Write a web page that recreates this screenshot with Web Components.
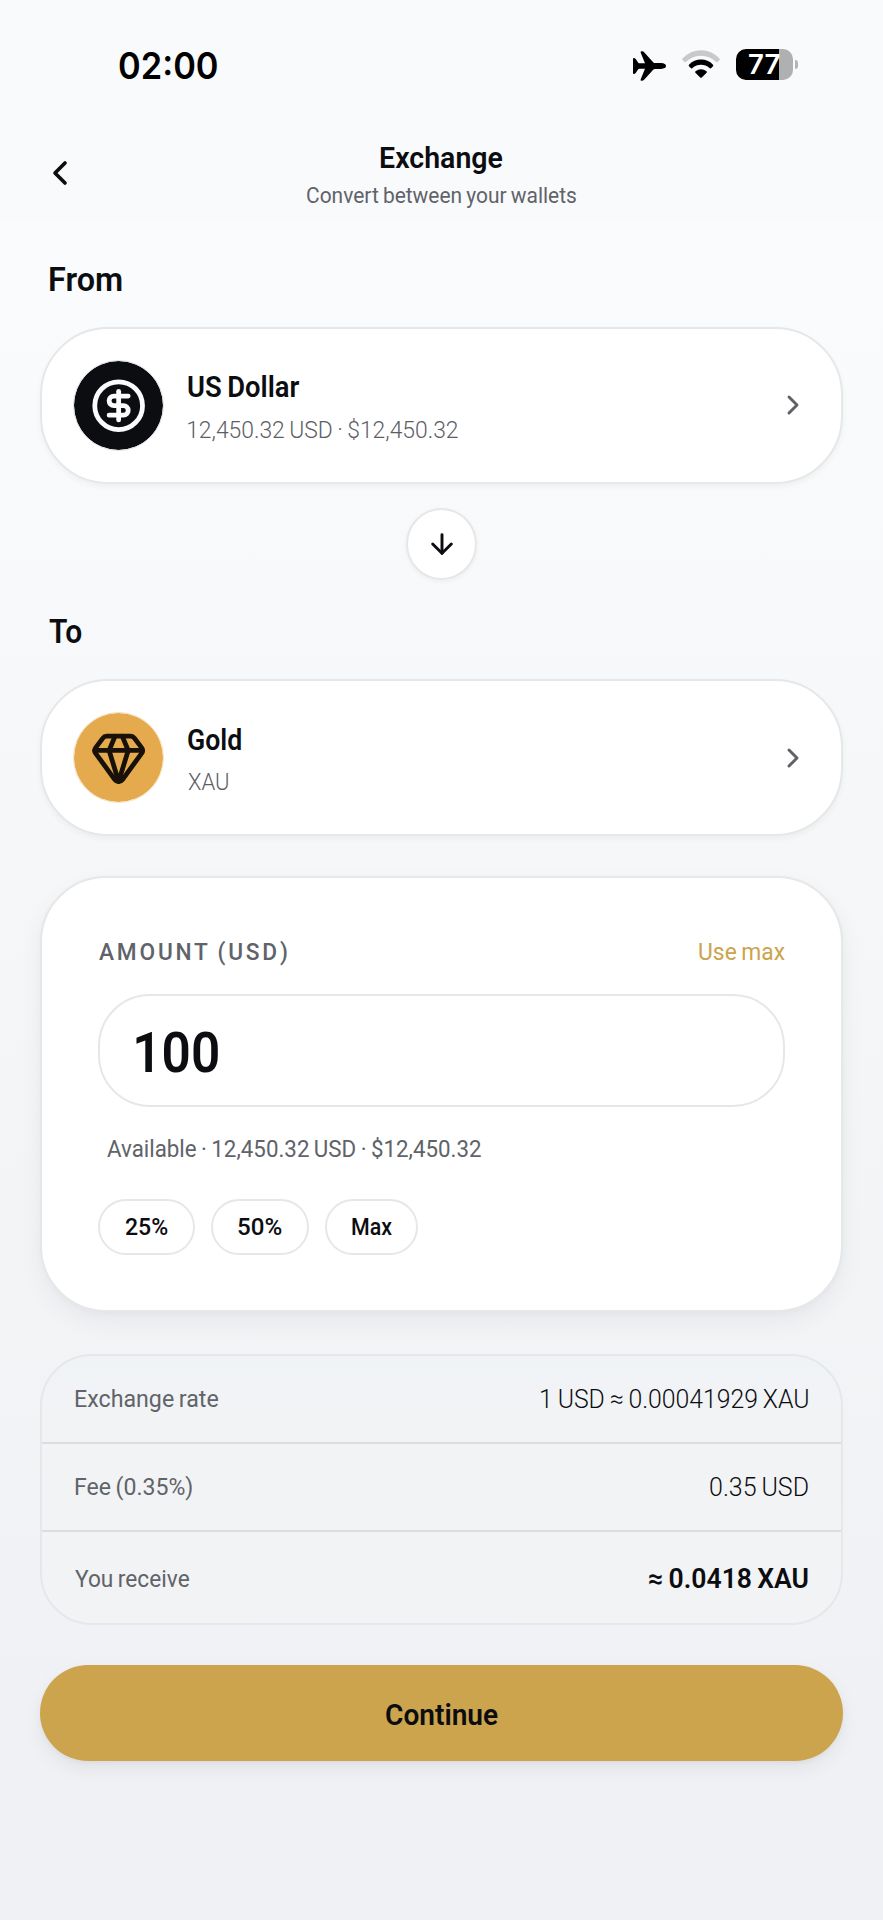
<!DOCTYPE html>
<html lang="en">
<head>
<meta charset="utf-8">
<title>Exchange</title>
<style>
html,body{margin:0;padding:0}
body{width:883px;height:1920px;overflow:hidden;font-family:Roboto,"Open Sans",sans-serif;color:#0c0d11}
</style>
</head>
<body>
<exchange-screen></exchange-screen>
<script>
const ctx = document.createElement('canvas').getContext('2d');
const define = (name, html, ready) => customElements.define(name, class extends HTMLElement {
  connectedCallback() {
    if (this.shadowRoot) return;
    const t = document.createElement('template');
    t.innerHTML = html;
    this.attachShadow({mode: 'open'}).appendChild(t.content.cloneNode(true));
    if (ready) ready(this, this.shadowRoot);
  }
});

/* One line of text whose ink fills the given width. */
define('fit-text', `<style>
:host{display:block;flex:none;white-space:nowrap}
span{display:inline-block;transform-origin:0 50%;white-space:pre}
</style><span><slot></slot></span>`, (el, root) => {
  const a = n => el.getAttribute(n);
  const size = +a('size'), w = +a('w'), ls = +(a('spacing') || 0), weight = a('weight') || 400;
  const family = a('family') || 'Roboto';
  const ws = -size * 0.05;
  const span = root.querySelector('span');
  el.style.width = w + 'px';
  el.style.height = el.style.lineHeight = size * 1.2 + 'px';
  span.style.font = `${weight} ${size}px/${size * 1.2}px ${family}, sans-serif`;
  span.style.letterSpacing = ls + 'px';
  span.style.wordSpacing = ws + 'px';
  ctx.font = `${weight} ${size}px ${family}, sans-serif`;
  ctx.letterSpacing = ls + 'px';
  ctx.wordSpacing = ws + 'px';
  const m = ctx.measureText(el.textContent);
  const k = w / (m.actualBoundingBoxRight + m.actualBoundingBoxLeft);
  span.style.transform = `translateX(${m.actualBoundingBoxLeft * k}px) scaleX(${k})`;
});

const icons = {
  back: '<path d="m15 18-6-6 6-6"/>',
  next: '<path d="m9 18 6-6-6-6"/>',
  down: '<path d="M12 5v14"/><path d="m19 12-7 7-7-7"/>',
  dollar: '<circle cx="12" cy="12" r="10"/><path d="M16 8h-6a2 2 0 1 0 0 4h4a2 2 0 1 1 0 4H8"/><path d="M12 18V6"/>',
  gem: '<path d="M10.5 3 8 9l4 13 4-13-2.5-6"/><path d="M17 3a2 2 0 0 1 1.6.8l3 4a2 2 0 0 1 .013 2.382l-7.99 10.986a2 2 0 0 1-3.247 0l-7.99-10.986A2 2 0 0 1 2.4 7.8l2.998-3.997A2 2 0 0 1 7 3z"/><path d="M2 9h20"/>'
};
define('line-icon', `<style>:host{display:block;flex:none}svg{display:block;fill:none;stroke:currentColor;stroke-linecap:round;stroke-linejoin:round}</style><svg viewBox="0 0 24 24"></svg>`, (el, root) => {
  const s = root.querySelector('svg');
  s.setAttribute('width', el.getAttribute('size'));
  s.setAttribute('height', el.getAttribute('size'));
  s.setAttribute('stroke-width', el.getAttribute('stroke') || 2);
  s.innerHTML = icons[el.getAttribute('name')];
});

define('battery-level', `<style>
:host{display:flex;align-items:center;gap:2px;height:31px}
.body{width:57px;height:31px;box-sizing:border-box;border-radius:10px;background:linear-gradient(90deg,#000 43.5px,#afb0b2 43.5px);padding:0 0 0 12.500px;color:#fff}
.nub{width:3px;height:9px;border-radius:0 4px 4px 0;background:#b3b4b6}
</style><div class="body"><fit-text size="26.500" weight="600" family="Inter" w="31">77</fit-text></div><div class="nub"></div>`);

define('status-bar', `<style>
:host{display:flex;height:131px;box-sizing:border-box;padding:44.500px 85px 0 119px;justify-content:space-between;align-items:flex-start;color:#000}
.icons{display:flex;padding-top:4.500px}
svg{display:block}
.plane{margin:1px 16.500px 0 0}.wifi{margin:1px 16px 0 0}
</style>
<fit-text size="36.5" weight="600" family="Inter" w="98.500">02:00</fit-text>
<div class="icons">
<svg class="plane" width="33" height="32" viewBox="0 0 33 32"><path d="M0 8.8Q0 8 .9 8Q1.8 8 2.7 9L5.200 12.700Q5.600 13.300 6.400 13.300H12L7.700 2.800Q7.200 1.300 8.500 1.300H9.200Q10.600 1.300 11.600 2.700L20.400 12.400Q21 13.100 22 13.100H28Q33 13.400 33 16Q33 18.600 28 18.900H22Q21 18.900 20.400 19.600L11.600 29.300Q10.600 30.700 9.200 30.700H8.500Q7.200 30.700 7.700 29.200L12 18.700H6.400Q5.600 18.700 5.200 19.300L2.700 23Q1.800 24 .9 24Q0 24 0 23.200Z"/></svg>
<svg class="wifi" width="38" height="29" viewBox="0 0 38 29"><path fill="#c8c9cb" d="M.5 8.4Q8.5.2 19 .2T37.500 8.400Q38.200 9.200 37.500 10L35.500 12Q34.800 12.500 34 11.800Q27.500 5.800 19 5.800T4 11.800Q3.200 12.500 2.500 12L.5 10Q-.2 9.200.5 8.400Z"/><path d="M7 14.700Q12 9.600 19 9.600T31 14.700Q31.700 15.500 31 16.200L29 18.200Q28.300 18.800 27.500 18.100Q23.800 14.800 19 14.800T10.500 18.100Q9.700 18.800 9 18.200L7 16.200Q6.300 15.500 7 14.700Z"/><path d="M13.500 21.200Q16 19.200 19 19.200T24.500 21.200Q25.300 22 24.600 22.700L19.800 27.400Q19 28.200 18.200 27.400L13.400 22.700Q12.700 22 13.500 21.200Z"/></svg>
<battery-level></battery-level>
</div>`);

define('page-header', `<style>
:host{display:grid;grid-template-columns:1fr auto 1fr;height:90px;box-sizing:border-box;padding:10px 40px 0}
.back{padding:12px 0 0 0}
.mid{display:flex;flex-direction:column;align-items:center;gap:6.200px}
.sub{color:#606369}
</style>
<line-icon class="back" name="back" size="40" stroke="2.200"></line-icon>
<div class="mid"><fit-text size="29.500" weight="600" w="122">Exchange</fit-text><fit-text class="sub" size="22" w="269.500">Convert between your wallets</fit-text></div><span></span>`);

define('wallet-card', `<style>
:host{display:flex;align-items:center;box-sizing:border-box;height:157px;padding:0 31px 0 31px;border:2px solid #e6e7e9;border-radius:68px;background:#fff;box-shadow:0 3px 6px rgba(15,20,30,.045)}
.coin{width:91px;height:91px;box-sizing:border-box;border-radius:50%;border:1.500px solid;background-clip:padding-box!important;display:flex;align-items:center;justify-content:center;flex:none}
:host([coin=dollar]) .coin{background:#0c0d11;color:#fafbfd;border-color:#e0e1e4}
:host([coin=gem]) .coin{background:#e6aa4e;color:#171109;border-color:#f5dfba}
.names{display:flex;flex-direction:column;gap:9.200px;margin-left:24px;padding-top:2.500px;flex:1}
::slotted([slot=sub]){color:#5b5e64}
.next{color:#5f6167;margin-right:1.500px}
</style>
<div class="coin"><line-icon size="57.300"></line-icon></div>
<div class="names"><slot name="name"></slot><slot name="sub"></slot></div>
<line-icon class="next" name="next" size="32" stroke="2.200"></line-icon>`, (el, root) => {
  const old = root.querySelector('.coin line-icon');
  const icon = document.createElement('line-icon');
  icon.setAttribute('name', el.getAttribute('coin'));
  icon.setAttribute('size', '57.3');
  old.replaceWith(icon);
});

define('swap-button', `<style>
:host{display:flex;align-items:center;justify-content:center;box-sizing:border-box;width:71px;height:72px;border-radius:50%;border:2px solid #e6e7e9;background:#fff;box-shadow:0 2px 5px rgba(15,20,30,.045)}
</style><line-icon name="down" size="32" stroke="2.200"></line-icon>`);

define('quick-chip', `<style>
:host{display:flex;align-items:center;justify-content:center;box-sizing:border-box;height:56px;border:2px solid #e6e7e9;border-radius:28px}
</style><slot></slot>`);

define('amount-card', `<style>
:host{display:block;box-sizing:border-box;height:436px;padding:59px 56px 0;border:2px solid #e6e7e9;border-radius:66px;background:#fff;box-shadow:0 10px 24px rgba(15,20,30,.05),0 2px 6px rgba(15,20,30,.025)}
.head{display:flex;justify-content:space-between;color:#606369}
.head :first-child{margin-left:.500px}
.max{color:#cba44d}
.input{margin:27.800px 0 0;box-sizing:border-box;height:113px;border:2px solid #e6e7e9;border-radius:52px;padding:24px 0 0 36px}
.avail{margin:26.600px 0 0 8.500px;color:#606369}
.chips{display:flex;gap:16px;margin-top:36px}
</style>
<div class="head"><fit-text size="24.300" weight="500" spacing="3" w="188">AMOUNT (USD)</fit-text><fit-text class="max" size="24.300" w="86">Use max</fit-text></div>
<div class="input"><fit-text size="55" weight="600" w="82">100</fit-text></div>
<fit-text class="avail" size="24.300" w="374">Available · 12,450.32 USD · $12,450.32</fit-text>
<div class="chips">
<quick-chip style="width:97px"><fit-text size="24" weight="500" w="42.500">25%</fit-text></quick-chip>
<quick-chip style="width:98px"><fit-text size="24" weight="500" w="43.500">50%</fit-text></quick-chip>
<quick-chip style="width:93px"><fit-text size="24" weight="500" w="40">Max</fit-text></quick-chip>
</div>`);

define('summary-row', `<style>
:host{display:flex;align-items:center;justify-content:space-between;box-sizing:border-box;height:88px;padding:.500px 33px 0 33px;border-bottom:2px solid #dcdde0}
:host(:last-child){border-bottom:0;height:91px;padding-top:2px}
::slotted([slot=label]){color:#606369}
</style><slot name="label"></slot><slot name="value"></slot>`);

define('summary-list', `<style>
:host{display:block;box-sizing:border-box;height:271px;border:2px solid #e6e7e9;border-radius:52px;background:linear-gradient(#f0f3f6,#f2f3f5 30%,#f2f3f5)}
</style><slot></slot>`);

define('primary-button', `<style>
:host{display:flex;align-items:center;justify-content:center;box-sizing:border-box;height:96px;padding-top:4px;border-radius:48px;background:#cba44d;box-shadow:0 8px 20px rgba(15,20,30,.06),0 2px 5px rgba(15,20,30,.04)}
</style><slot></slot>`);

define('exchange-screen', `<style>
:host{display:block;width:883px;height:1920px;background:linear-gradient(#fbfcfe 0,#fafbfd 300px,#f4f5f7 1100px,#eff1f4 1750px,#eff1f4)}
.top{background:#f9fafc;height:221px}
main{display:flex;flex-direction:column;padding:0 40px}
.h{margin:39px 0 27.400px 10px}
.h.to{margin:31.800px 0 28.100px 9px}
swap-button{margin:24px auto 0 366px}
amount-card{margin-top:40px}
summary-list{margin-top:42px}
primary-button{margin-top:40px}
</style>
<div class="top"><status-bar></status-bar><page-header></page-header></div>
<main>
<fit-text class="h" size="33" weight="600" w="71.500">From</fit-text>
<wallet-card coin="dollar"><fit-text slot="name" size="30" weight="600" w="111.500">US Dollar</fit-text><fit-text slot="sub" size="24.500" weight="350" w="270">12,450.32 USD · $12,450.32</fit-text></wallet-card>
<swap-button></swap-button>
<fit-text class="h to" size="33" weight="600" w="32.500">To</fit-text>
<wallet-card coin="gem"><fit-text slot="name" size="30" weight="600" w="53.500">Gold</fit-text><fit-text slot="sub" size="24.500" weight="350" w="40.500">XAU</fit-text></wallet-card>
<amount-card></amount-card>
<summary-list>
<summary-row><fit-text slot="label" size="24" w="143">Exchange rate</fit-text><fit-text slot="value" size="26" weight="350" w="267.500">1 USD ≈ 0.00041929 XAU</fit-text></summary-row>
<summary-row><fit-text slot="label" size="24" w="117">Fee (0.35%)</fit-text><fit-text slot="value" size="26" weight="350" w="98">0.35 USD</fit-text></summary-row>
<summary-row><fit-text slot="label" size="24" w="114">You receive</fit-text><fit-text slot="value" size="27.500" weight="600" w="159">≈ 0.0418 XAU</fit-text></summary-row>
</summary-list>
<primary-button><fit-text size="30" weight="600" w="112">Continue</fit-text></primary-button>
</main>`);
</script>
</body>
</html>
